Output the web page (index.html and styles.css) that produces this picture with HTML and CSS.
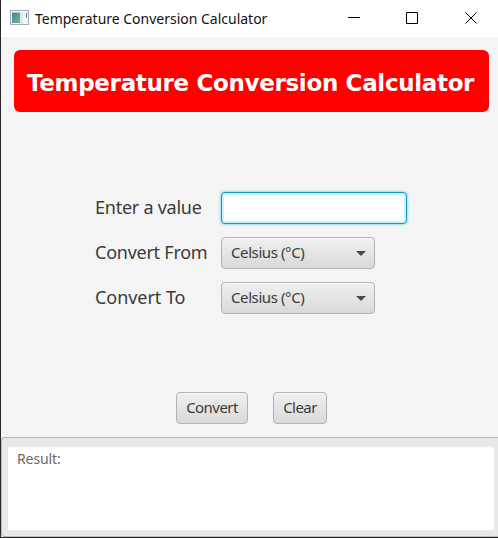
FILE: index.html
```html
<!DOCTYPE html>
<html lang="en">
<head>
<meta charset="utf-8">
<title>Temperature Conversion Calculator</title>
<link rel="stylesheet" href="styles.css">
</head>
<body>
<div class="window">
  <header class="titlebar">
    <svg class="app-icon" width="19" height="15" viewBox="0 0 19 15">
      <defs><linearGradient id="pane" x1="0" y1="0" x2="1" y2="1"><stop offset="0" stop-color="#4684a0"/><stop offset="1" stop-color="#76b58b"/></linearGradient></defs>
      <rect x=".5" y=".5" width="18" height="14" fill="#f4f6f6" stroke="#a3adb2"/>
      <rect x="2" y="2.5" width="8" height="10.500" fill="url(#pane)"/>
      <rect x="10" y="2.500" width="3" height="10.500" fill="#dfe9ea"/>
      <rect x="16" y="3" width="1" height="5" fill="#55868a"/>
    </svg>
    <span class="title">Temperature Conversion Calculator</span>
    <svg class="controls" width="130" height="13" viewBox="0 0 130 13" fill="none" stroke="#000">
      <path d="M0 5.500H12M58.500.5h11v11h-11zM117.500.5l11 11M128.500.5l-11 11"/>
    </svg>
  </header>
  <main class="content">
    <h1 class="banner"><span>Temperature Conversion Calculator</span></h1>
    <form class="form">
      <label for="value">Enter a value</label>
      <input class="field" id="value" type="text">
      <span class="label">Convert From</span>
      <div class="combo"><span>Celsius (°C)</span><i class="arrow"></i></div>
      <span class="label l-to">Convert To</span>
      <div class="combo"><span>Celsius (°C)</span><i class="arrow"></i></div>
    </form>
    <div class="actions">
      <button class="button convert">Convert</button>
      <button class="button clear">Clear</button>
    </div>
  </main>
  <section class="result"><div class="output"><span>Result:</span></div></section>
</div>
</body>
</html>
```
FILE: styles.css
```css
* { box-sizing: border-box; }
body { margin: 0; font-family: "Noto Sans", "Open Sans", sans-serif; color: #3a3a3a; }
.window {
  width: 498px; height: 538px; overflow: hidden;
  display: flex; flex-direction: column;
  background: #f4f4f4;
  border-left: 1px solid #29282d; border-bottom: 1px solid #29262b;
}
.titlebar {
  height: 37px; flex: none; display: flex; align-items: flex-start;
  background: #fff; padding-left: 9px; color: #111;
}
.app-icon { margin-top: 10px; flex: none; }
.title {
  margin: 9px 0 0 6px; width: 234px; flex: none; white-space: nowrap;
  font-size: 14px; line-height: 20px; letter-spacing: -.01px;
}
.controls { margin: 12px 0 0 79px; flex: none; }
.content { height: 400px; flex: none; padding: 13px 8px 0 13px; }
.banner {
  margin: 0; height: 62px; width: 475px; border-radius: 6px;
  background: #f00; color: #fff;
  font: bold 23px/66px "DejaVu Sans", sans-serif; letter-spacing: -.33px;
  padding-left: 13px; white-space: nowrap;
}
.form {
  display: grid; grid-template-columns: 126px 186px; grid-auto-rows: 32px;
  row-gap: 13px; margin: 80px 0 0 81px;
}
label, .label { font-size: 18px; line-height: 31px; white-space: nowrap; letter-spacing: -.25px; }
.l-to { letter-spacing: -.05px; }
.field {
  width: 186px; height: 32px; padding: 0 8px; outline: none;
  border: 1px solid #1597bd; border-radius: 4px; background: #fff;
  box-shadow: 0 0 3px #48bddd, inset 0 0 1px 2px #c5f2fb;
}
.combo, .button {
  height: 32px; border: 1px solid #b2b3b2; border-radius: 4px;
  background: linear-gradient(#f0f0f0, #d9d9d9); box-shadow: inset 0 1px #f8f8f8;
  font: 15px/30px "Noto Sans", "Open Sans", sans-serif; color: #3a3a3a; white-space: nowrap;
}
.combo {
  width: 154px; display: flex; justify-content: space-between; align-items: flex-start;
  padding: 0 8px 0 9px; letter-spacing: -.4px;
}
.combo span { line-height: 29px; }
.arrow { border: 5px solid transparent; border-top-color: #4b4b4b; border-bottom: 0; margin-top: 13px; }
.actions { display: flex; gap: 25px; margin: 78px 0 0 162px; }
.button { padding: 0 0 2px; line-height: 28px; letter-spacing: -.55px; }
.convert { width: 72px; }
.clear { width: 54px; }
.result {
  height: 100px; flex: none; background: #e8e8e8;
  border: solid #b7b7b7; border-width: 1px 0 1px 1px; border-radius: 4px 0 0 4px;
  padding: 8px 4px 7px 6px;
}
.output {
  height: 84px; background: #fff; box-shadow: inset 0 2px 2px -1px #e5e5e5;
  color: #686868; font-size: 14px; line-height: 20px; padding: 3px 0 0 9px;
  letter-spacing: -.1px;
}
```
